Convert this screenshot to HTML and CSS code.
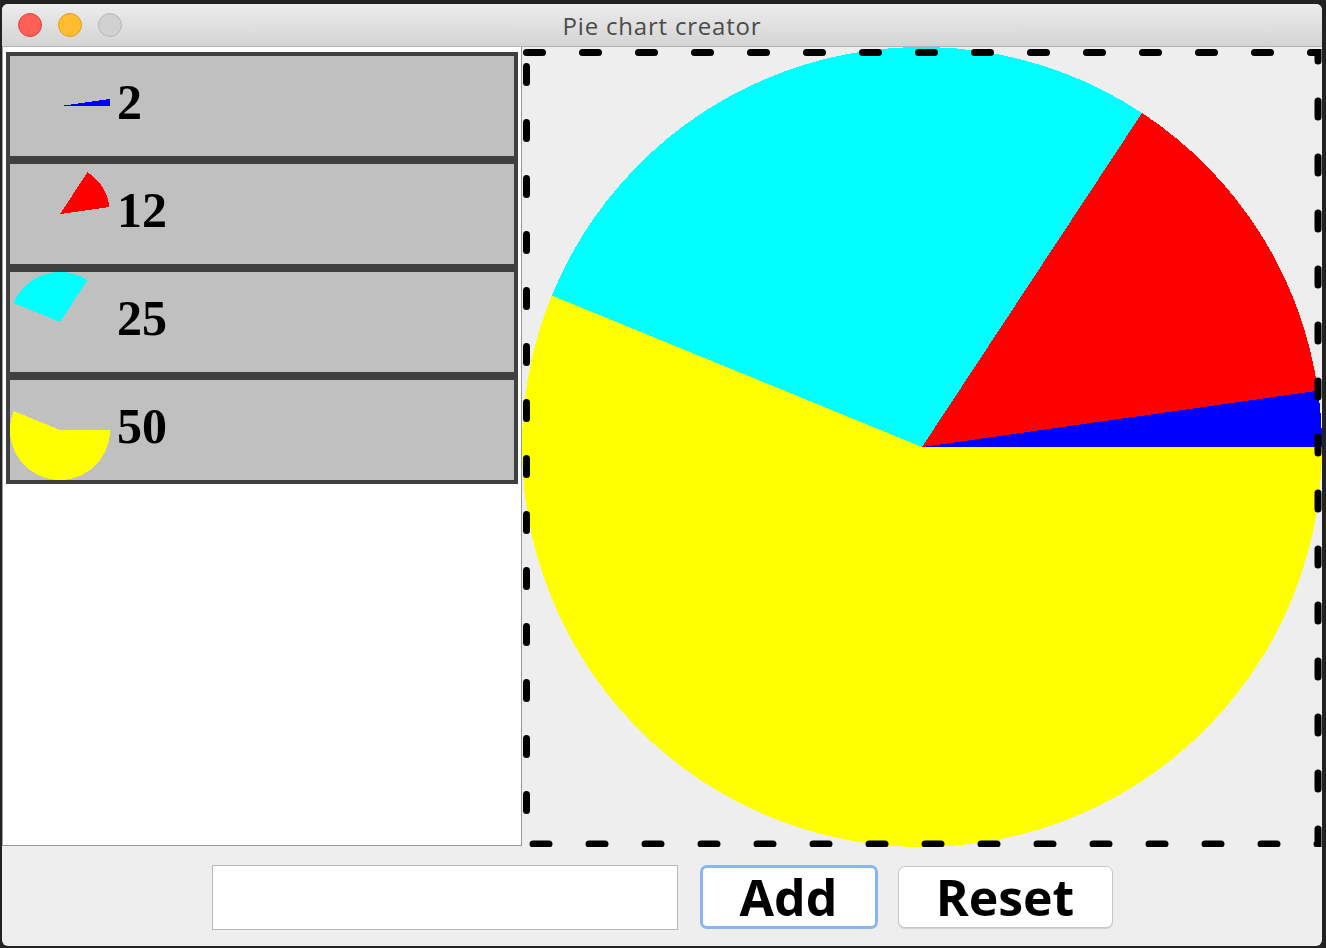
FILE: index.html
```html
<!DOCTYPE html>
<html lang="en">
<head>
<meta charset="utf-8">
<title>Pie chart creator</title>
<link rel="stylesheet" href="styles.css">
</head>
<body>
<div class="window">
  <div class="titlebar">
    <div class="lights">
      <span class="light light-red"></span>
      <span class="light light-yellow"></span>
      <span class="light light-gray"></span>
    </div>
    <div class="title">Pie chart creator</div>
    <div class="spacer"></div>
  </div>
  <div class="main">
    <div class="list">
      <div class="item">
        <svg class="mini" viewBox="0 0 100 100"><path shape-rendering="crispEdges" fill="#0000ff" d="M50 50 L100 50 A50 50 0 0 0 99.503 42.964 Z"/></svg>
        <span class="value">2</span>
      </div>
      <div class="item">
        <svg class="mini" viewBox="0 0 100 100"><path shape-rendering="crispEdges" fill="#ff0000" d="M50 50 L99.503 42.964 A50 50 0 0 0 77.503 8.243 Z"/></svg>
        <span class="value">12</span>
      </div>
      <div class="item">
        <svg class="mini" viewBox="0 0 100 100"><path shape-rendering="crispEdges" fill="#00ffff" d="M50 50 L77.503 8.243 A50 50 0 0 0 3.721 31.069 Z"/></svg>
        <span class="value">25</span>
      </div>
      <div class="item">
        <svg class="mini" viewBox="0 0 100 100"><path shape-rendering="crispEdges" fill="#ffff00" d="M50 50 L3.721 31.069 A50 50 0 1 0 100 50 Z"/></svg>
        <span class="value">50</span>
      </div>
    </div>
    <div class="canvas">
      <svg class="chart" width="800" height="800" viewBox="0 0 800 800">
        <g shape-rendering="crispEdges">
          <path fill="#0000ff" d="M400 400 L800 400 A400 400 0 0 0 796.02 343.71 Z"/>
          <path fill="#ff0000" d="M400 400 L796.02 343.71 A400 400 0 0 0 620.02 65.95 Z"/>
          <path fill="#00ffff" d="M400 400 L620.02 65.95 A400 400 0 0 0 29.77 248.56 Z"/>
          <path fill="#ffff00" d="M400 400 L29.77 248.56 A400 400 0 1 0 800 400 Z"/>
        </g>
        <rect x="4.5" y="5.5" width="791.5" height="791.5" fill="none" stroke="#000" stroke-width="7" stroke-dasharray="16 40" stroke-linecap="round"/>
      </svg>
    </div>
  </div>
  <div class="bottombar">
    <input class="field" type="text" aria-label="Value">
    <button class="btn btn-add" type="button">Add</button>
    <button class="btn btn-reset" type="button">Reset</button>
  </div>
</div>
</body>
</html>
```

FILE: styles.css
```css
html, body {
  margin: 0;
  background: #222222;
}
body {
  height: 948px;
  box-sizing: border-box;
  padding: 4px 0 0 2px;
  overflow: hidden;
}
.window {
  width: 1320px;
  height: 942px;
  background: #eeeeee;
  border-radius: 6px;
  overflow: hidden;
  display: flex;
  flex-direction: column;
}
.titlebar {
  height: 43px;
  flex: none;
  box-sizing: border-box;
  border-bottom: 1px solid #b3b3b3;
  background: linear-gradient(#ececec, #d4d4d4);
  display: grid;
  grid-template-columns: 1fr auto 1fr;
  align-items: center;
}
.lights {
  display: flex;
  gap: 16px;
  padding-left: 16px;
}
.light {
  width: 22px;
  height: 22px;
  border-radius: 50%;
  border: 1px solid;
}
.light-red { background: #fe5f57; border-color: #e1443e; }
.light-yellow { background: #febc2e; border-color: #dfa123; }
.light-gray { background: #d1d1d1; border-color: #b7b7b7; }
.title {
  font-family: "Open Sans", "Liberation Sans", sans-serif;
  font-size: 24px;
  letter-spacing: 0.8px;
  color: #4b4b4b;
}
.main {
  display: grid;
  grid-template-columns: 520px 800px;
  height: 800px;
  flex: none;
}
.list {
  background: #ffffff;
  border-left: 1px solid #a0a0a0;
  border-right: 1px solid #999999;
  border-bottom: 1px solid #999999;
  height: 799px;
  box-sizing: border-box;
  padding: 5px 3px 0 3px;
  display: flex;
  flex-direction: column;
}
.item {
  height: 108px;
  box-sizing: border-box;
  border: 4px solid #404040;
  background: #c0c0c0;
  display: flex;
  align-items: center;
}
.mini {
  width: 100px;
  height: 100px;
  flex: none;
  display: block;
}
.value {
  font-family: "Liberation Serif", "Times New Roman", serif;
  font-weight: bold;
  font-size: 50px;
  margin-left: 7px;
  margin-bottom: 8px;
  color: #000000;
}
.canvas {
  background: #eeeeee;
}
.chart {
  display: block;
}
.bottombar {
  flex: 1;
  display: flex;
  justify-content: center;
  align-items: flex-start;
  padding-top: 18px;
}
.field {
  width: 466px;
  height: 65px;
  box-sizing: border-box;
  border: 1px solid #b8b8b8;
  background: #ffffff;
  margin: 0;
  padding: 0;
  outline: none;
}
.btn {
  font-family: "Open Sans", "Liberation Sans", sans-serif;
  font-weight: bold;
  font-size: 50px;
  line-height: 1;
  color: #000000;
  background: #ffffff;
  border-radius: 7px;
  padding: 0;
  margin-top: 0;
  box-sizing: border-box;
  display: flex;
  align-items: center;
  justify-content: center;
}
.btn-add {
  width: 178px;
  height: 64px;
  border: 3px solid #89b6ef;
  margin-left: 22px;
}
.btn-reset {
  width: 215px;
  height: 62px;
  border: 1px solid #c6c6c6;
  margin-left: 20px;
  margin-top: 1px;
  box-shadow: 0 1px 1px rgba(0, 0, 0, 0.12);
}
```
